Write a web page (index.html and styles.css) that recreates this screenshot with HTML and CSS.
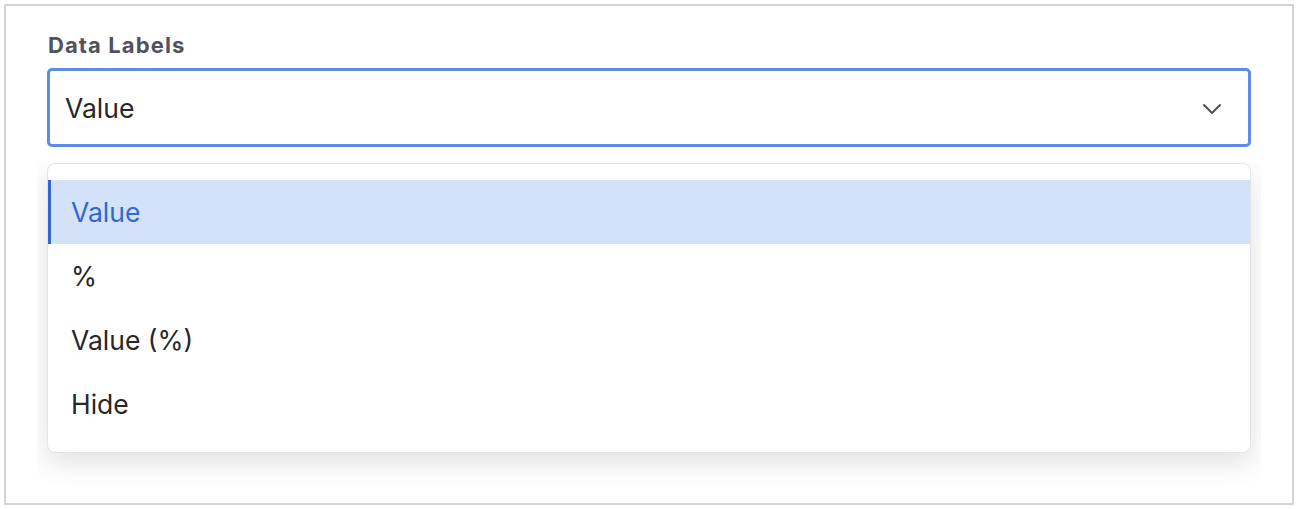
FILE: index.html
```html
<!DOCTYPE html>
<html>
<head>
<meta charset="utf-8">
<link rel="stylesheet" href="styles.css">
</head>
<body>
<div class="frame">
  <div class="label">Data Labels</div>
  <div class="select">
    <span class="select-value">Value</span>
    <svg class="chevron" width="20" height="12" viewBox="0 0 20 12"><path d="M2 2 L10 10 L18 2" fill="none" stroke="#505058" stroke-width="2" stroke-linecap="round" stroke-linejoin="round"/></svg>
  </div>
  <div class="menu-clip">
    <ul class="menu">
      <li class="option active">Value</li>
      <li class="option">%</li>
      <li class="option">Value (%)</li>
      <li class="option">Hide</li>
    </ul>
  </div>
</div>
</body>
</html>
```

FILE: styles.css
```css
* { box-sizing: border-box; }
html, body { margin: 0; padding: 0; background: #fff; }
body { padding: 4px; font-family: Inter, "Noto Sans", sans-serif; }
.frame {
  width: 1290px;
  height: 501px;
  border: 2px solid #d4d4d8;
  padding: 27px 41px 0;
  background: #fff;
}
.label {
  font-size: 22px;
  line-height: 24px;
  font-weight: 700;
  color: #52525b;
  padding-left: 1px;
  letter-spacing: 1.1px;
}
.select {
  margin-top: 11px;
  height: 79px;
  border: 3px solid #5b8ce8;
  border-radius: 5px;
  display: flex;
  align-items: center;
  justify-content: space-between;
  padding: 0 26px 0 15px;
}
.select-value {
  font-size: 26.5px;
  color: #27272a;
}
.chevron { display: block; margin-top: 2px; }
.menu-clip {
  margin: 16px -10px 0;
  padding: 0 10px 40px;
  overflow: hidden;
}
.menu {
  list-style: none;
  margin: 0;
  padding: 16px 0;
  border: 1px solid #e4e4e7;
  border-radius: 8px;
  background: #fff;
  box-shadow: 0 10px 28px rgba(0, 0, 0, 0.12);
}
.option {
  height: 64px;
  display: flex;
  align-items: center;
  padding-left: 23px;
  font-size: 26.5px;
  color: #27272a;
}
.option.active {
  background: #d3e2f9;
  color: #3166d3;
  border-left: 3px solid #3166d3;
  padding-left: 20px;
}
```
